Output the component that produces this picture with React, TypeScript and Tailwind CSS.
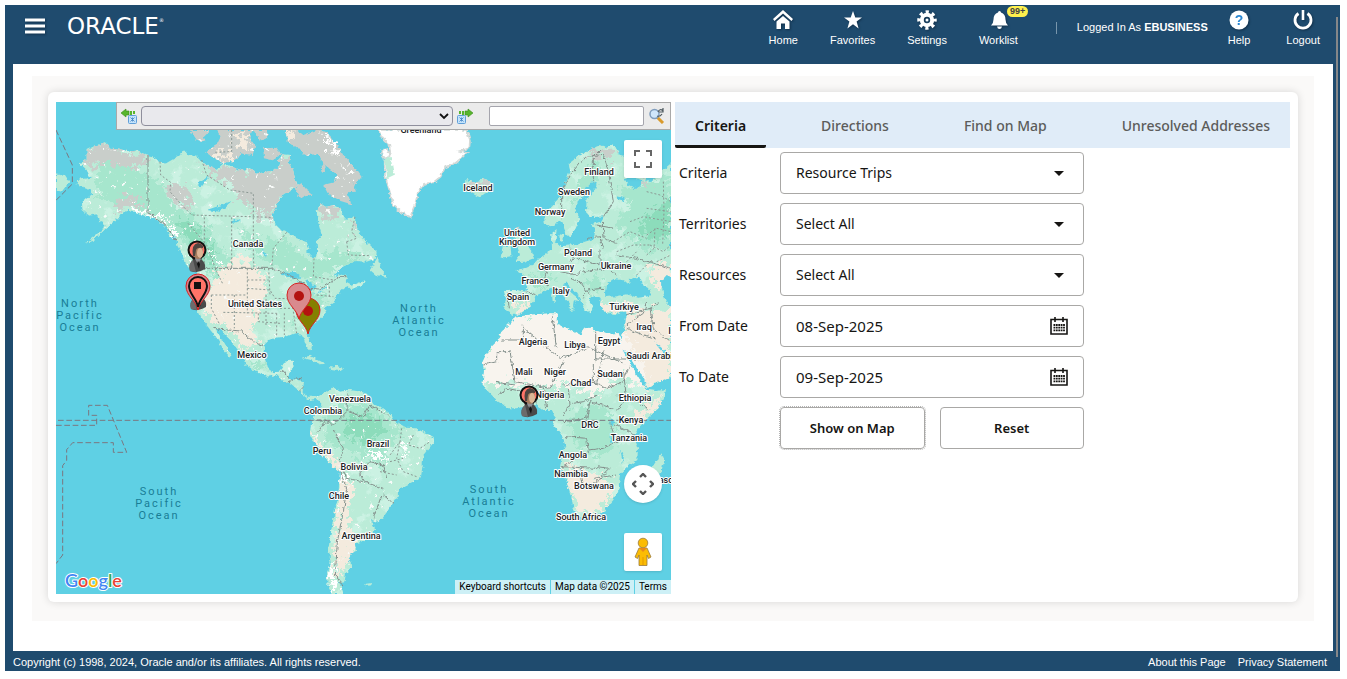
import { useState } from 'react';
import type { ReactNode } from 'react';

const TABS = ['Criteria', 'Directions', 'Find on Map', 'Unresolved Addresses'];

const NORTH_AMERICA =
    'M110 165L135 152L165 142L180 158L200 160L240 170L262 166L295 180L330 200L346 206L365 195L388 182L402 166L415 180L440 185L455 200L480 215L500 224L520 205L545 215L575 226L600 220L620 236L650 230L672 226L690 210L684 196L700 178L720 180L716 205L728 222L735 250L744 272L722 288L702 296L690 310L680 335L668 360L672 385L690 402L710 410L740 430L770 440L776 456L772 470L790 492L802 475L800 440L815 420L805 385L800 350L810 325L828 336L850 330L872 342L882 370L900 372L911 360L922 400L934 424L960 450L980 470L978 490L950 500L918 498L900 504L870 520L850 545L880 538L892 545L886 562L905 572L945 556L936 572L905 582L890 574L878 582L860 600L850 625L825 640L828 655L815 668L800 680L778 694L768 706L776 730L786 755L780 766L770 755L762 732L755 720L735 715L715 722L700 725L675 728L658 734L646 746L640 775L648 805L665 832L690 830L698 808L712 798L730 797L726 822L716 838L715 850L740 855L762 858L758 890L770 905L795 905L815 900L808 916L798 912L780 915L765 905L745 885L720 865L695 855L680 840L650 845L610 825L585 808L582 790L568 770L552 750L538 732L520 715L508 700L498 702L510 724L522 742L534 762L548 784L538 784L518 762L508 744L494 722L476 698L466 686L450 665L438 640L430 618L430 590L440 560L442 530L425 510L405 505L398 480L382 452L378 428L352 402L335 385L312 368L280 360L255 350L235 345L215 355L204 372L182 386L160 408L132 435L105 446L138 420L160 402L165 385L148 378L140 358L118 362L98 345L96 322L128 296L118 282L80 270L82 255L122 248L110 225L90 205L110 195Z';
const SOUTH_AMERICA =
    'M808 916L815 900L830 892L848 876L870 890L900 885L935 890L955 900L970 928L1000 940L1025 960L1030 975L1045 985L1070 998L1100 1000L1130 1015L1150 1025L1152 1042L1135 1062L1120 1080L1118 1110L1112 1148L1080 1165L1050 1180L1040 1210L1018 1240L998 1270L980 1280L963 1274L975 1300L965 1325L930 1342L914 1345L918 1368L902 1376L896 1394L906 1412L888 1434L884 1458L866 1462L874 1472L880 1497L846 1497L832 1470L832 1430L842 1400L835 1360L845 1300L852 1260L865 1200L870 1130L850 1115L825 1090L805 1058L780 1022L784 1006L786 985L790 964L806 948L814 930Z';
const EURASIA =
    'M1484 388L1482 352L1510 328L1535 300L1545 265L1560 225L1556 206L1590 180L1610 170L1630 160L1650 150L1668 156L1685 150L1708 165L1702 180L1735 188L1800 215L1806 240L1778 254L1740 246L1722 250L1735 270L1760 282L1778 262L1774 246L1800 262L1822 240L1863 205L1863 845L1836 856L1790 878L1782 864L1764 832L1742 800L1722 766L1714 740L1718 716L1726 690L1730 652L1712 654L1690 660L1664 650L1650 630L1652 612L1638 602L1612 610L1628 636L1620 656L1602 640L1594 618L1582 596L1562 576L1548 562L1540 568L1552 584L1576 602L1590 618L1575 616L1572 634L1556 642L1560 622L1540 604L1520 578L1500 580L1480 592L1456 602L1450 622L1430 644L1396 662L1376 652L1362 644L1368 610L1362 590L1372 584L1400 586L1428 590L1436 562L1418 540L1396 526L1430 518L1450 508L1470 486L1492 474L1506 458L1504 416L1520 402L1516 440L1530 454L1580 450L1604 440L1632 432L1636 400L1622 388L1654 380L1664 364L1622 366L1608 352L1610 310L1636 282L1640 264L1622 262L1606 278L1604 300L1580 322L1576 350L1590 372L1576 402L1560 424L1546 418L1540 388L1528 376L1510 396Z';
const AFRICA =
    'M1395 668L1430 660L1505 655L1524 656L1522 690L1555 700L1588 720L1602 700L1622 698L1640 708L1680 716L1706 714L1712 735L1725 765L1740 800L1755 835L1776 862L1790 884L1820 888L1848 882L1845 902L1825 940L1790 972L1765 1000L1752 1022L1764 1060L1762 1095L1738 1112L1710 1138L1706 1180L1690 1215L1660 1250L1630 1262L1590 1266L1572 1248L1565 1210L1550 1160L1530 1115L1536 1080L1546 1050L1535 1020L1510 990L1515 960L1505 945L1480 945L1460 930L1432 934L1400 940L1375 940L1345 920L1325 900L1305 880L1298 865L1302 830L1298 800L1315 765L1340 740L1355 710L1375 690Z';
const ISLANDS =
    'M960 525L982 488L992 512L1008 545L978 540ZM1245 275L1250 255L1270 262L1310 250L1330 270L1320 290L1285 305L1260 292ZM1395 395L1408 392L1402 412L1424 440L1446 470L1452 490L1424 500L1394 502L1410 480L1404 460L1394 430ZM1352 488L1358 455L1382 450L1384 484ZM18 235L45 240L58 260L35 290L18 285ZM755 788L780 782L826 806L808 808L780 794ZM840 815L858 812L882 820L872 828L844 826ZM1835 1075L1842 1095L1835 1130L1812 1166L1800 1150L1800 1126ZM1528 418L1542 420L1540 440L1530 438ZM1552 636L1574 640L1568 650ZM1506 596L1516 596L1514 622L1508 618ZM350 395L362 412L370 432L360 428ZM402 502L425 514L440 528L420 522ZM948 1466L966 1464L964 1470L946 1474Z';
const ARCTIC =
    'M420 105L480 105L462 126L466 142L440 134ZM465 170L500 150L512 125L500 105L560 105L560 135L582 165L560 195L520 205L490 188ZM548 105L612 105L598 128L616 152L608 180L580 176L560 150ZM610 105L650 105L655 128L634 136L622 124ZM640 160L680 158L694 180L668 196L642 190ZM704 105L742 105L760 120L800 105L832 112L862 150L882 184L914 218L934 245L908 262L918 290L892 292L904 328L872 318L834 296L820 270L852 262L862 240L820 206L806 178L762 180L744 158L716 148ZM735 285L752 262L768 282L788 298L750 310ZM900 226L918 222L935 246L912 274ZM812 212L826 208L828 228L814 230Z';
const GREENLAND =
    'M985 105L1250 105L1260 135L1258 160L1230 168L1252 174L1215 205L1186 216L1172 245L1150 262L1122 266L1105 290L1096 325L1086 350L1082 366L1052 352L1030 330L1018 285L1005 240L1004 200L1022 180L1018 150L998 130ZM994 165L1012 162L1020 182L1000 188Z';

const BOREAL =
    'M140 190L230 220L295 240L330 260L360 320L420 360L470 400L520 470L560 500L500 560L470 530L440 490L400 440L350 380L300 350L240 330L190 330L150 300ZM560 400L640 440L700 430L780 500L830 470L880 470L940 490L860 520L800 560L740 540L690 520L620 480ZM780 590L830 600L810 640L760 680L720 690L740 640ZM600 240L640 290L600 300ZM820 960L860 930L950 920L1010 960L1030 990L1060 1010L1020 1060L990 1110L940 1090L880 1060L830 1040ZM1570 960L1620 920L1680 950L1700 1000L1690 1060L1640 1090L1570 1040ZM1560 320L1600 240L1640 190L1650 250L1600 300ZM1700 280L1863 240L1863 460L1780 470L1700 380L1740 330ZM1420 550L1480 530L1520 550L1470 580ZM1600 560L1640 540L1660 580L1630 600ZM600 790L650 810L640 830L600 815Z';
const DRY =
    'M455 590L490 570L510 520L560 480L620 510L650 560L640 620L620 670L610 720L625 750L590 760L560 730L530 700L490 680L460 640ZM700 105L740 105L720 145ZM780 1010L810 1040L830 1070L868 1100L880 1140L900 1150L910 1200L890 1240L900 1300L915 1350L890 1430L862 1440L852 1400L862 1290L866 1180L850 1115L810 1080ZM1400 630L1436 620L1430 650L1390 662ZM1790 520L1863 490L1863 600L1840 580L1810 560ZM1650 625L1730 625L1760 640L1740 660L1650 660ZM1545 1110L1600 1120L1680 1160L1690 1200L1640 1250L1600 1256L1570 1220ZM1780 940L1846 885L1820 950L1780 980L1750 960ZM1730 650L1863 640L1863 860L1780 880L1700 720ZM490 165L545 170L540 195L500 200ZM560 110L600 120L590 160L565 150Z';
const SAHARA =
    'M1290 870L1288 800L1330 740L1370 670L1520 645L1600 690L1720 705L1800 860L1740 870L1720 830L1680 870L1640 900L1560 870L1500 880L1420 870L1340 862Z';
const TUNDRA =
    'M90 205L110 165L165 140L240 170L290 180L270 205L210 215L170 200L130 215ZM200 215L240 190L300 200L240 220ZM340 290L370 270L410 280L430 330L400 340ZM450 200L480 215L545 215L620 236L690 210L690 180L745 180L744 272L690 320L680 350L620 340L570 320L540 265L480 240ZM610 345L660 350L670 380L640 375ZM805 320L860 330L880 365L850 372L812 370ZM905 360L922 400L912 420ZM190 320L240 300L290 330L240 335L200 345ZM1600 180L1640 150L1700 165L1680 190L1640 180ZM1770 245L1800 262L1790 280ZM1245 255L1330 250L1325 280L1300 270L1250 280ZM1385 390L1410 390L1405 410L1390 405Z';
const SNOW =
    'M235 345L255 338L300 352L340 375L350 392L310 370L280 362ZM350 385L385 415L380 432ZM418 392L428 388L430 412ZM478 466L496 480L516 515L500 505ZM810 108L832 130L860 150L880 186L856 178L830 144ZM885 222L908 230L906 244ZM838 1400L850 1400L848 1440L860 1470L858 1497L838 1490L832 1440ZM410 480L425 490L420 502ZM868 1130L880 1130L898 1155L888 1170L872 1150ZM960 1060L964 1078L996 1070L1000 1088L950 1085ZM1062 1040L1070 1038L1070 1092L1062 1088ZM1545 235L1558 230L1552 246Z';
const LAKES =
    'M470 345L515 330L545 318L510 350ZM440 270L480 240L455 275ZM542 380L556 374L575 374L545 386ZM635 458L652 488L640 480ZM690 535L735 530L755 548L715 548ZM742 560L760 562L752 605L740 595ZM765 552L800 575L780 590ZM786 600L815 585L810 592ZM810 582L832 578L822 586ZM1665 592L1668 570L1690 552L1722 556L1734 566L1742 560L1736 552L1768 545L1776 565L1800 585L1802 602L1765 608L1730 598L1700 604L1666 606ZM1832 560L1850 540L1863 546L1863 640L1846 616ZM1680 975L1694 976L1690 990L1678 988ZM1710 1060L1722 1090L1718 1105ZM1682 1012L1690 1048L1682 1040ZM1700 300L1722 306L1726 322L1706 316ZM1718 765L1732 770L1790 865L1776 868ZM1812 740L1850 770L1863 790L1850 788Z';
const STATE_LINES =
    'M330 200L332 240L362 262L360 290L395 330L425 360L668 367M463 367L463 520M545 367L545 520M610 367L610 480L612 520M455 195L470 240L540 285L610 295L610 367M545 105L545 170L490 172M414 385L470 450L500 530L520 570M484 600L592 600M592 520L592 655M520 652L680 655M484 600L484 640L510 690M553 600L553 700M592 555L656 555M656 520L660 600M592 580L660 585L675 610L740 612M648 600L648 690M625 655L625 680L690 685M680 655L680 725M703 655L703 720M730 650L740 715M690 640L800 640M735 600L735 640M780 600L780 635M800 600L850 605M800 680L760 655M838 575L838 610M792 490L790 545L850 555M710 412L670 460L665 520M890 440L920 430L905 410L915 365M890 440L895 480L958 482M1055 1000L1050 1040L1020 1080M1090 1020L1075 1050L1110 1060L1140 1040M1050 1040L1040 1090L1060 1130L1100 1145M1020 1100L1060 1090M990 1130L1040 1140M1790 290L1830 300L1863 320M1790 340L1863 350M1740 380L1780 365L1863 380M1790 420L1820 400L1863 410M1800 450L1840 470L1863 450M1815 400L1812 460L1790 480M1840 260L1842 350L1838 450M1820 500L1863 480M1690 440L1740 410L1790 430M1700 470L1750 450L1800 450M1730 500L1760 470M1760 540L1800 500L1850 520';
const COUNTRY_LINES =
    'M294 180L294 352L340 385L382 440M455 520L665 520L740 550L780 580L810 582L870 545L890 545M490 700L530 705L575 708L610 740L640 752M690 838L700 828L720 850M712 862L735 848L758 852M748 888L762 875M820 975L850 990L890 950L895 890M790 975L830 975L800 1015M895 950L940 965L960 930L1020 965M850 1005L880 1060L870 1100L890 1150L940 1160L1000 1180M870 1130L890 1180L880 1250L862 1340L856 1440L880 1475M940 1160L930 1130L960 1100L1000 1110L1010 1150M995 1200L970 1270M1000 1200L1030 1225M1535 372L1535 290L1560 240L1605 185L1660 178M1630 262L1630 185L1650 165M1660 178L1675 230L1690 320L1660 365M1640 390L1690 400M1610 430L1650 425L1660 460M1660 380L1662 430L1700 445M1700 480L1760 490L1863 520M1560 455L1570 490L1550 520M1575 490L1650 510L1650 460M1600 530L1670 520L1700 540M1620 600L1590 560L1560 550M1660 580L1610 585L1600 610M1470 500L1490 530L1480 560L1500 575M1430 590L1460 600M1372 595L1378 640M1530 530L1580 540L1600 520M1725 660L1800 640L1830 620M1730 690L1780 655L1790 620M1800 640L1810 700L1863 740M1730 700L1780 720L1820 730M1355 735L1420 735L1420 690M1385 770L1340 770L1340 800L1300 810M1420 700L1530 790L1560 780L1610 760M1505 660L1510 690L1520 760M1610 755L1730 810M1637 710L1637 800M1637 792L1760 792M1380 765L1395 860L1500 880L1540 800M1340 862L1395 870M1540 870L1640 865L1660 770M1630 810L1630 860L1670 880L1720 860L1740 810M1555 880L1560 930L1540 960M1640 900L1600 920L1570 925M1700 900L1760 920L1790 940M1720 830L1730 910L1700 945M1540 980L1610 970L1620 920L1690 940M1545 1025L1610 1030L1615 1070L1540 1115M1615 1065L1660 1060L1700 1040L1680 985M1590 1115L1600 1175L1640 1160L1680 1120L1640 1115M1535 1115L1640 1120M1630 1150L1700 1140M1700 1040L1750 1035M1695 990L1755 1020M1345 900L1370 880L1420 890L1430 930M1450 880L1460 930M1480 880L1490 940';

const LABELS: [string, number, number][] = [
    ['Greenland', 365, 28], ['Iceland', 422, 86], ['Finland', 543, 70], ['Sweden', 518, 90], ['Norway', 494, 110],
    ['United', 461, 131], ['Kingdom', 461, 140], ['Poland', 522, 151], ['Germany', 500, 165], ['Ukraine', 560, 164],
    ['France', 479, 179], ['Italy', 505, 189], ['Spain', 462, 195], ['Türkiye', 568, 205], ['Iraq', 588, 225],
    ['Iran', 620, 229], ['Algeria', 477, 240], ['Libya', 519, 243], ['Egypt', 553, 239], ['Saudi Arabia', 596, 254],
    ['Mali', 468, 270], ['Niger', 499, 270], ['Chad', 525, 281], ['Sudan', 554, 272], ['Nigeria', 494, 293],
    ['Ethiopia', 579, 296], ['Kenya', 575, 318], ['DRC', 534, 323], ['Tanzania', 573, 336], ['Angola', 517, 353],
    ['Namibia', 515, 372], ['Botswana', 538, 384], ['South Africa', 525, 415], ['Madagascar', 600, 378],
    ['Canada', 192, 142], ['United States', 199, 202], ['Mexico', 196, 253], ['Venezuela', 294, 297],
    ['Colombia', 267, 309], ['Peru', 266, 349], ['Brazil', 322, 342], ['Bolivia', 298, 365], ['Chile', 283, 394],
    ['Argentina', 305, 434],
];

const OCEANS: [string[], number, number][] = [
    [['North', 'Pacific', 'Ocean'], 24, 201],
    [['North', 'Atlantic', 'Ocean'], 363, 206],
    [['South', 'Pacific', 'Ocean'], 103, 389],
    [['South', 'Atlantic', 'Ocean'], 433, 387],
];

function Pin({ x, y, fill, stroke = '#d62222', dot = true }: { x: number; y: number; fill: string; stroke?: string; dot?: boolean }) {
    return (
        <g transform={`translate(${x} ${y})`}>
            <path d="M0 0C-2-10-12-14-12-24A12 12 0 0 1 12-24C12-14 2-10 0 0Z" fill={fill} stroke={stroke} />
            {dot && <circle cy="-23" r="5" fill="#b3120f" />}
        </g>
    );
}

function Person({ x, y }: { x: number; y: number }) {
    return (
        <g transform={`translate(${x} ${y})`}>
            <path d="M-7 1L-2 13H2L7 1Z" fill="#3a3030" />
            <circle r="8.500" cy="-2" fill="#ff7468" stroke="#111" strokeWidth="2" />
            <path d="M-7 19Q-9 12-4 8L4 7Q9 11 8 17Q0 22-7 19Z" fill="#4a4a4a" />
            <path d="M-7 19Q-9 12-4 8L-1 20Z" fill="#6c6c6c" />
            <path d="M-2 7L1 12L4 7L2 4H-1Z" fill="#8f8f92" />
            <path d="M1 9L3 12L2 17L0 12Z" fill="#111" />
            <ellipse cx="1" cy="0" rx="5" ry="7" fill="#a57c5e" />
            <ellipse cx="3" cy="1" rx="3" ry="5" fill="#dcb696" />
            <path d="M-4 4Q-6-8 1-9Q7-8 6-4Q0-5-1-2L-2 4Z" fill="#4f4540" />
        </g>
    );
}

function WorldMap() {
    return (
        <svg viewBox="0 0 615 492" preserveAspectRatio="xMidYMid slice" className="absolute inset-0 h-full w-full" role="img" aria-label="World map">
            <defs>
                <clipPath id="land">
                    <path d={NORTH_AMERICA + SOUTH_AMERICA + EURASIA + AFRICA + ISLANDS + ARCTIC} />
                </clipPath>
                <filter id="ragged" x="0" y="0" width="1" height="1">
                    <feTurbulence type="fractalNoise" baseFrequency="0.06" numOctaves="4" seed="4" />
                    <feDisplacementMap in="SourceGraphic" scale="70" xChannelSelector="R" yChannelSelector="G" />
                </filter>
                <filter id="coast" x="0" y="0" width="1" height="1">
                    <feTurbulence type="fractalNoise" baseFrequency="0.09" numOctaves="2" seed="9" />
                    <feDisplacementMap in="SourceGraphic" scale="14" xChannelSelector="R" yChannelSelector="G" />
                </filter>
                {/* scattered vegetation and ice specks */}
                <filter id="forest" x="0" y="0" width="1" height="1">
                    <feTurbulence type="fractalNoise" baseFrequency="0.02" numOctaves="5" seed="12" />
                    <feColorMatrix values="0 0 0 0 0.6  0 0 0 0 0.89  0 0 0 0 0.77  9 0 0 0 -5" />
                    <feComposite in2="SourceGraphic" operator="in" />
                </filter>
                <filter id="specks" x="0" y="0" width="1" height="1">
                    <feTurbulence type="fractalNoise" baseFrequency="0.07" numOctaves="2" seed="31" />
                    <feColorMatrix values="0 0 0 0 0.94  0 0 0 0 0.97  0 0 0 0 0.95  0 14 0 0 -10" />
                    <feComposite in2="SourceGraphic" operator="in" />
                </filter>
            </defs>
            <rect width="615" height="492" fill="#5fd0e4" />
            <g transform="scale(0.33333) translate(-18 -21)">
                <g filter="url(#coast)">
                    <path d={NORTH_AMERICA + SOUTH_AMERICA + EURASIA + AFRICA + ISLANDS} fill="#bbecd8" />
                    <path d={ARCTIC} fill="#c9ceca" />
                    <g clipPath="url(#land)">
                        <path d={NORTH_AMERICA + SOUTH_AMERICA + EURASIA + AFRICA} fill="#fff" filter="url(#forest)" />
                        <g filter="url(#ragged)">
                            <path d={BOREAL} fill="#a6e6cd" />
                            <path d="M380 370L430 380L470 430L500 500L470 500L420 440ZM900 960L980 970L1010 1010L960 1040L880 1020ZM1760 400L1863 300L1863 420L1800 440Z" fill="#8cdcbb" />
                            <path d={DRY} fill="#f4ebde" />
                            <path d={SAHARA} fill="#f8f4ee" />
                            <path d={TUNDRA} fill="#c9ceca" />
                            <path d={SNOW} fill="#fff" />
                        </g>
                        <path d={NORTH_AMERICA + ARCTIC + SOUTH_AMERICA} fill="#fff" filter="url(#specks)" />
                    </g>
                    <path d={GREENLAND} fill="#fff" stroke="#d5dad8" strokeWidth="5" />
                    <path d="M1004 190L1022 185L1032 240L1012 250Z" fill="#bbecd8" />
                    <path d={LAKES} fill="#5fd0e4" />
                    <path d={COUNTRY_LINES} fill="none" stroke="#84908c" strokeWidth="3" />
                </g>
                <path d={STATE_LINES} fill="none" stroke="#8b9893" strokeWidth="3" strokeDasharray="6 6" />
                <path
                    d="M18 105L67 210L67 267L18 316M24 976H1863M18 991H140V961H116V931H172L230 1072H190V1043H68L50 1064V1096L38 1112V1380L18 1406"
                    fill="none"
                    stroke="#7b7680"
                    strokeWidth="3"
                    strokeDasharray="17 8"
                />
            </g>

            {OCEANS.map(([lines, x, y]) => (
                <g key={`${x}-${y}`} className="font-['Roboto',sans-serif] text-[11px] tracking-[2px]" fill="#197d96" textAnchor="middle" dominantBaseline="central">
                    {lines.map((line, i) => (
                        <text key={line} x={x} y={y + i * 12}>{line}</text>
                    ))}
                </g>
            ))}
            <g
                className="font-['Roboto',sans-serif] text-[9px] font-medium"
                fill="#202124"
                stroke="#fff"
                strokeWidth="2"
                strokeLinejoin="round"
                paintOrder="stroke"
                textAnchor="middle"
                dominantBaseline="central"
            >
                {LABELS.map(([name, x, y]) => (
                    <text key={name} x={x} y={y}>{name}</text>
                ))}
            </g>

            <Person x={141} y={150} />
            <Person x={142} y={188} />
            <Pin x={142} y={208} fill="#dd8087" dot={false} />
            <g transform="translate(142 205)">
                <path d="M0 0C-1-8-9-13-9-21A9 9 0 0 1 9-21C9-13 1-8 0 0Z" fill="#ff7468" stroke="#111" strokeWidth="2" />
                <rect x="-4" y="-25" width="7" height="7" fill="#111" />
            </g>
            <Pin x={252} y={232} fill="#848000" />
            <Pin x={243} y={217} fill="#d98a8e" />
            <Person x={473} y={295} />
        </svg>
    );
}

function MoveIcon({ flip = false }: { flip?: boolean }) {
    return (
        <svg viewBox="0 0 16 16" className="h-4 w-4 shrink-0" aria-hidden="true">
            <g transform={flip ? 'translate(16 0) scale(-1 1)' : undefined}>
                <path d="M0 5L5 1V3H8V7H5V9Z" fill="#58b52c" stroke="#3b8f1c" strokeWidth=".6" />
                <path d="M9 3h2v4H9zM12 3h2v3h-2z" fill="#58b52c" />
                <rect x="7.5" y="7.5" width="8" height="8" rx="1" fill="#c4e3fb" stroke="#5f9fd8" />
                <path d="M9.500 9.500l4 4M13.500 9.500l-4 4M11.500 9.500v4" stroke="#3b7fc0" strokeWidth=".8" />
            </g>
        </svg>
    );
}

function MapPanel() {
    return (
        <section className="relative h-[492px] min-w-0 flex-1 overflow-hidden bg-[#5fd0e4]">
            <WorldMap />

            <div className="absolute top-0 right-0 left-[60px] flex h-7 items-center border border-[#a9a9a9] bg-[#ebebeb] px-1">
                <button type="button" aria-label="Previous" className="mr-1"><MoveIcon /></button>
                <span className="relative flex flex-1">
                    <select aria-label="Map location" className="h-5 w-full appearance-none rounded border border-[#8f8f9d] bg-[#e9e9ed]">
                        <option></option>
                    </select>
                    <svg viewBox="0 0 10 10" className="pointer-events-none absolute top-[5px] right-1 h-[10px] w-[10px]">
                        <path d="M1 3L5 7L9 3" fill="none" stroke="#111" strokeWidth="1.800" />
                    </svg>
                </span>
                <button type="button" aria-label="Next" className="mr-4 ml-1"><MoveIcon flip /></button>
                <input aria-label="Search map" className="h-5 w-[155px] rounded-xs border border-[#a5a5ad] bg-white px-1 text-xs" />
                <button type="button" aria-label="Search" className="ml-1">
                    <svg viewBox="0 0 18 16" className="h-4 w-[18px]">
                        <path d="M9 9l6 6" stroke="#d99a2b" strokeWidth="3" />
                        <circle cx="6.500" cy="6" r="4.500" fill="#cfe6fa" stroke="#7f9dbd" strokeWidth="1.500" />
                        <path d="M10 4Q12 0 15 3M15 0v4h-4M9 8q3 1 5-2" fill="none" stroke="#4e5a60" strokeWidth="1.200" />
                    </svg>
                </button>
            </div>

            <button type="button" aria-label="Toggle fullscreen view" className="absolute top-[38px] right-[9px] flex h-[38px] w-[38px] items-center justify-center rounded-xs bg-white shadow-sm">
                <svg viewBox="0 0 18 18" className="h-[18px] w-[18px]">
                    <path d="M1 6V1H6M12 1H17V6M17 12V17H12M6 17H1V12" fill="none" stroke="#666" strokeWidth="2" />
                </svg>
            </button>
            <button type="button" aria-label="Map camera controls" className="absolute right-[9px] bottom-[91px] flex h-[38px] w-[38px] items-center justify-center rounded-full bg-white shadow-sm">
                <svg viewBox="0 0 22 22" className="h-[22px] w-[22px]">
                    <path d="M8 4L11 1L14 4M18 8L21 11L18 14M14 18L11 21L8 18M4 14L1 11L4 8" fill="none" stroke="#555" strokeWidth="2.400" />
                </svg>
            </button>
            <button type="button" aria-label="Street View" className="absolute right-[9px] bottom-[23px] flex h-[38px] w-[38px] items-center justify-center rounded-xs bg-white shadow-sm">
                <svg viewBox="0 0 18 30" className="h-[30px] w-[18px]">
                    <path d="M5 11H13L17 20L14.500 21.500L13 18V28.500H5V18L3.500 21.500L1 20Z" fill="#fbbc04" stroke="#9a7b3d" strokeWidth=".8" />
                    <path d="M9 20V28" stroke="#e39a00" />
                    <circle cx="9" cy="6" r="4.800" fill="#fbbc04" stroke="#9a7b3d" strokeWidth=".8" />
                    <path d="M5 11H13L9 15Z" fill="#e8891c" />
                </svg>
            </button>

            <svg viewBox="0 0 66 26" className="absolute bottom-0 left-[7px] h-[26px] w-[66px]" role="img" aria-label="Google">
                <text x="2" y="19" className="font-['Lato',sans-serif] text-[18px] font-semibold" stroke="#fff" strokeWidth="2" strokeLinejoin="round" paintOrder="stroke">
                    <tspan fill="#4285f4">G</tspan>
                    <tspan fill="#ea4335">o</tspan>
                    <tspan fill="#fbbc05">o</tspan>
                    <tspan fill="#4285f4">g</tspan>
                    <tspan fill="#34a853">l</tspan>
                    <tspan fill="#ea4335">e</tspan>
                </text>
            </svg>
            <div className="absolute right-0 bottom-0 flex h-[14px] gap-px font-['Roboto',sans-serif] text-[10px] leading-[14px] text-black">
                <button type="button" className="bg-[#cdf0f6] px-1">Keyboard shortcuts</button>
                <span className="bg-[#cdf0f6] px-1">Map data ©2025</span>
                <a href="#terms" className="bg-[#cdf0f6] px-1">Terms</a>
            </div>
        </section>
    );
}

function CalendarIcon() {
    return (
        <svg viewBox="0 0 18 18" className="h-[18px] w-[18px]">
            <path d="M1 2.500H17V17H1Z" fill="none" stroke="#161513" strokeWidth="1.600" />
            <path d="M5 0V5M13 0V5" stroke="#161513" strokeWidth="1.600" />
            <path d="M3.500 8H15M3.500 10.700H15M3.500 13.400H15" stroke="#161513" strokeWidth="1.800" strokeDasharray="1.800 .6" />
        </svg>
    );
}

const FIELD = 'h-[42px] w-full appearance-none rounded border border-[#a9a8a6] bg-white px-[15px] text-[#161513]';

function SelectField({ id, label, options }: { id: string; label: string; options: string[] }) {
    return (
        <>
            <label htmlFor={id}>{label}</label>
            <div className="relative">
                <select id={id} className={`${FIELD} text-sm`}>
                    {options.map((option) => (
                        <option key={option}>{option}</option>
                    ))}
                </select>
                <svg viewBox="0 0 10 5" className="pointer-events-none absolute top-[19px] right-[20px] h-[5px] w-[10px]">
                    <path d="M0 0H10L5 5Z" fill="#161513" />
                </svg>
            </div>
        </>
    );
}

function DateField({ id, label, value }: { id: string; label: string; value: string }) {
    return (
        <>
            <label htmlFor={id}>{label}</label>
            <div className="relative">
                <input id={id} type="text" defaultValue={value} className={`${FIELD} text-[15px]`} />
                <button type="button" aria-label={`Choose ${label}`} className="absolute top-3 right-4">
                    <CalendarIcon />
                </button>
            </div>
        </>
    );
}

function NavItem({ label, children }: { label: string; children: ReactNode }) {
    return (
        <a href={`#${label.toLowerCase()}`} className="relative flex flex-col items-center">
            <svg viewBox="0 0 20 20" className="h-5 w-5 drop-shadow-[1px_1px_1px_#12304a]" fill="#fff">{children}</svg>
            <span className="mt-1 leading-[13px]">{label}</span>
            {label === 'Worklist' && (
                <span className="absolute -top-1 left-[28px] rounded-full bg-[#fff04d] px-[3px] text-[9px] leading-[11px] font-bold text-[#444]">99+</span>
            )}
        </a>
    );
}

function Header() {
    return (
        <header className="flex h-[59px] items-start justify-between pr-5 pl-5 text-[11px] text-white">
            <div className="flex items-center gap-5 pt-[7px]">
                <button type="button" aria-label="Open menu">
                    <svg viewBox="0 0 22 16" className="h-4 w-[22px] drop-shadow-[1px_1px_1px_#12304a]">
                        <path d="M0 2H20M0 8H20M0 14H20" stroke="#fff" strokeWidth="2.800" />
                    </svg>
                </button>
                <a href="#oracle" className="flex font-['DejaVu_Sans',sans-serif] text-[23px] leading-7">
                    ORACLE<sup className="top-[6px] text-[5px] leading-none">®</sup>
                </a>
            </div>
            <nav className="flex items-start pt-[5px]">
                <div className="flex gap-8">
                    <NavItem label="Home">
                        <path d="M10 0L20 9L18.500 11L10 3.500L1.500 11L0 9Z" />
                        <path d="M3.500 11.500L10 6L16.500 11.500V19H12V13.500H8V19H3.500Z" />
                    </NavItem>
                    <NavItem label="Favorites">
                        <path d="M10 1L12.300 7.500H19L13.600 11.500L15.600 18.500L10 14.300L4.400 18.500L6.400 11.500L1 7.500H7.700Z" />
                    </NavItem>
                    <NavItem label="Settings">
                        <circle cx="10" cy="10" r="5.200" fill="none" stroke="#fff" strokeWidth="4" />
                        <circle cx="10" cy="10" r="8" fill="none" stroke="#fff" strokeWidth="3.500" strokeDasharray="3.140 3.140" strokeDashoffset="1.570" />
                        <circle cx="10" cy="10" r="1.500" />
                    </NavItem>
                    <NavItem label="Worklist">
                        <path d="M11.500 1Q13 1 13 2.500Q17.500 4 17.500 9.500Q17.500 13 20 15.500H3Q5.500 13 5.500 9.500Q5.500 4 10 2.500Q10 1 11.500 1ZM9 16.500H14Q13.500 19 11.500 19Q9.500 19 9 16.500Z" />
                    </NavItem>
                </div>
                <span className="mt-3 ml-[38px] h-3 w-px bg-[#7896ac]" />
                <span className="mt-[10px] ml-5 leading-[14px]">Logged In As <b>EBUSINESS</b></span>
                <div className="ml-5 flex gap-9">
                    <NavItem label="Help">
                        <circle cx="10" cy="10" r="9.500" />
                        <text x="10" y="15" textAnchor="middle" fill="#2b87d1" className="font-['Liberation_Sans',sans-serif] text-[14px] font-bold">?</text>
                    </NavItem>
                    <NavItem label="Logout">
                        <path d="M5.500 3.500A8 8 0 1 0 14.500 3.500" fill="none" stroke="#fff" strokeWidth="2.800" />
                        <path d="M8.700 0H11.300V10H8.700Z" />
                    </NavItem>
                </div>
            </nav>
        </header>
    );
}

export default function App() {
    const [tab, setTab] = useState('Criteria');

    return (
        <div className="bg-white pt-[5px] pr-[7px] pb-2 pl-[5px] font-['Liberation_Sans',sans-serif]">
            <div className="relative bg-[#1f4b6e]">
                <Header />
                <span className="absolute top-3 right-[2px] bottom-[14px] w-[2px] bg-[#858789]" />

                <main className="mr-[7px] ml-2 bg-white px-[19px] pt-3 pb-[30px]">
                    <div className="bg-[#faf9f8] px-4 pt-4 pb-[19px]">
                        <div className="flex gap-1 rounded-md bg-white px-2 pt-[10px] pb-2 shadow-[0_0_8px_rgba(0,0,0,0.14)]">
                            <MapPanel />

                            <section className="min-w-0 flex-1 font-['Noto_Sans',sans-serif] text-sm text-[#161513]">
                                <div role="tablist" className="flex h-[46px] justify-between bg-[#e0ecf8]">
                                    {TABS.map((name) => (
                                        <button
                                            key={name}
                                            type="button"
                                            role="tab"
                                            aria-selected={tab === name}
                                            onClick={() => setTab(name)}
                                            className={
                                                tab === name
                                                    ? 'rounded-xs border-b-3 border-[#161513] px-5 pt-1 font-semibold text-[#161513]'
                                                    : 'border-b-3 border-transparent px-5 pt-1 font-medium text-[#5c5c5b]'
                                            }
                                        >
                                            {name}
                                        </button>
                                    ))}
                                </div>
                                <form
                                    onSubmit={(e) => e.preventDefault()}
                                    className="grid grid-cols-[101px_minmax(0,304px)] items-center gap-y-[9px] pt-1 pl-1"
                                >
                                    <SelectField id="criteria" label="Criteria" options={['Resource Trips']} />
                                    <SelectField id="territories" label="Territories" options={['Select All']} />
                                    <SelectField id="resources" label="Resources" options={['Select All']} />
                                    <DateField id="from-date" label="From Date" value="08-Sep-2025" />
                                    <DateField id="to-date" label="To Date" value="09-Sep-2025" />
                                    <div className="col-start-2 grid grid-cols-2 gap-[15px] text-[13px] font-semibold">
                                        <button type="submit" className="h-[42px] rounded border border-[#a9a8a6] outline-1 outline-[#b5b5b5] outline-dotted">
                                            Show on Map
                                        </button>
                                        <button type="reset" className="h-[42px] rounded border border-[#a9a8a6]">Reset</button>
                                    </div>
                                </form>
                            </section>
                        </div>
                    </div>
                </main>

                <footer className="flex h-5 items-center justify-between pt-[2px] pr-[13px] pl-2 text-[11px] text-white">
                    <span>Copyright (c) 1998, 2024, Oracle and/or its affiliates. All rights reserved.</span>
                    <span className="flex gap-3">
                        <a href="#about">About this Page</a>
                        <a href="#privacy">Privacy Statement</a>
                    </span>
                </footer>
            </div>
        </div>
    );
}
